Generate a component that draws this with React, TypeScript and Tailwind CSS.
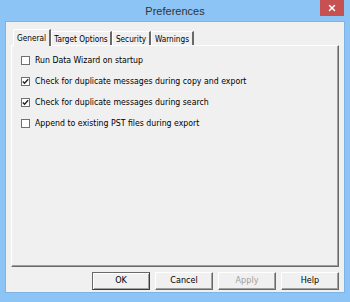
import { X } from "lucide-react";

const options = [
  { label: "Run Data Wizard on startup", checked: false },
  { label: "Check for duplicate messages during copy and export", checked: true },
  { label: "Check for duplicate messages during search", checked: true },
  { label: "Append to existing PST files during export", checked: false },
];

const tabs = [
  { label: "General", w: "w-[38px]" },
  { label: "Target Options", w: "w-[61px]" },
  { label: "Security", w: "w-[39px]" },
  { label: "Warnings", w: "w-[43px]" },
];

const uiFont = { fontFamily: '"DejaVu Sans Condensed", "Liberation Sans", Arial, sans-serif', fontStretch: "condensed" };

const Checkbox = ({ checked }: { checked: boolean }) => (
  <span className="w-[9px] h-[9px] border border-[#707070] bg-white flex items-center justify-center shrink-0">
    {checked && (
      <svg width="7" height="7" viewBox="0 0 7 7">
        <path d="M0.8 3.4 L2.6 5.3 L6.2 1.2" stroke="#222" strokeWidth="1.4" fill="none" />
      </svg>
    )}
  </span>
);

const Button = ({ label, primary, disabled }: { label: string; primary?: boolean; disabled?: boolean }) => (
  <div
    className={`w-[58px] h-[18px] flex items-center justify-center bg-[#f0f0f0] text-[9px] ${
      primary
        ? "border border-t-[#696969] border-l-[#696969] border-r-[#3c3c3c] border-b-[#3c3c3c] shadow-[inset_1px_1px_0_#fff,inset_-1px_-1px_0_#a0a0a0]"
        : "border border-t-white border-l-white border-r-[#696969] border-b-[#696969] shadow-[inset_-1px_-1px_0_#a0a0a0]"
    } ${disabled ? "text-[#a0a0a0]" : "text-black"}`}
  >
    {label}
  </div>
);

export default function App() {
  return (
    <div className="w-[350px] h-[302px] bg-[#8cc4f6] flex flex-col" style={uiFont}>
      <div className="h-[22px] relative flex items-center justify-center">
        <span
          className="text-[11px] text-[#333] pt-[1px]"
          style={{ fontFamily: '"Liberation Sans", Arial, sans-serif', fontStretch: "normal" }}
        >
          Preferences
        </span>
        <div className="absolute right-[6px] top-0 w-[24px] h-[16px] bg-[#c75050] flex items-center justify-center">
          <X size={10} strokeWidth={3.5} color="#fff" />
        </div>
      </div>

      <div className="mx-[6px] mb-[10px] flex-1 bg-[#f0f0f0] flex flex-col pl-[5px] pr-[5px] pt-[7px] shadow-[0_0_0_1px_#7fb3e3]">
        <div className="flex items-end h-[16px] pl-[2px]">
          {tabs.map((t, i) =>
            i === 0 ? (
              <div
                key={t.label}
                className={`${t.w} h-[17px] -mb-[1px] relative z-10 bg-[#f0f0f0] border-t border-l border-white border-r-2 border-r-[#696969] text-[8.2px] text-black flex items-start justify-center whitespace-nowrap pt-[2px]`}
              >
                {t.label}
              </div>
            ) : (
              <div
                key={t.label}
                className={`${t.w} h-[14px] border-t border-l border-white border-r-2 border-r-[#696969] text-[8.2px] text-black flex items-start justify-center whitespace-nowrap pt-[1px]`}
              >
                {t.label}
              </div>
            )
          )}
        </div>
        <div className="h-[222px] border-t border-l border-white border-r border-b border-r-[#696969] border-b-[#696969] shadow-[inset_-1px_-1px_0_#a0a0a0] flex flex-col gap-[10px] pt-[9px] pl-[9px]">
          {options.map((o) => (
            <div key={o.label} className="flex items-center gap-[5px] h-[11px] text-[8.7px] text-black">
              <Checkbox checked={o.checked} />
              <span>{o.label}</span>
            </div>
          ))}
        </div>
        <div className="flex justify-end gap-[5px] mt-[5px]">
          <Button label="OK" primary />
          <Button label="Cancel" />
          <Button label="Apply" disabled />
          <Button label="Help" />
        </div>
      </div>
    </div>
  );
}
